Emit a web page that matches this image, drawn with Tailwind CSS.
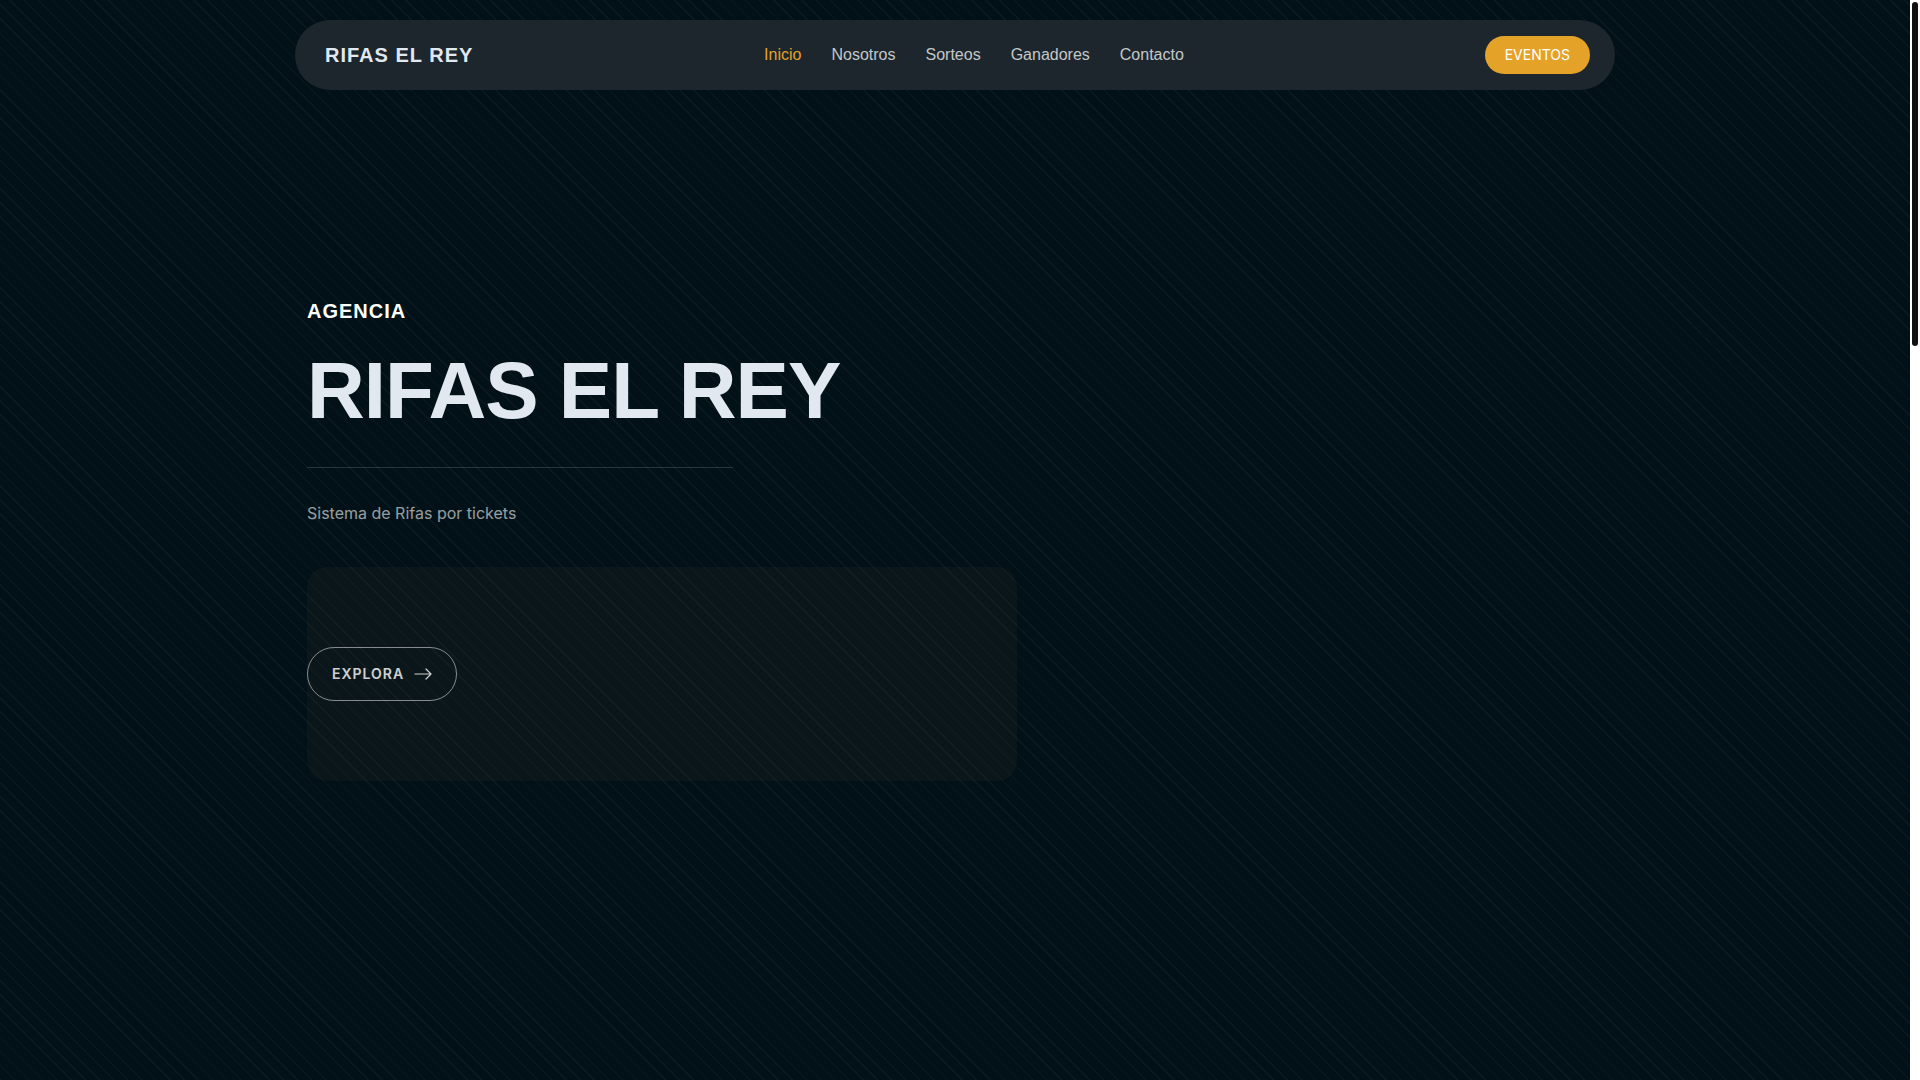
<!DOCTYPE html>
<html lang="es">
<head>
    <meta charset="UTF-8">
    <meta name="viewport" content="width=device-width, initial-scale=1.0">
    <title>Rifas El Rey</title>

    <script src="https://cdn.jsdelivr.net/npm/@tailwindcss/browser@4"></script>
</head>
<body class="flex h-screen overflow-hidden bg-white font-['Inter',sans-serif]">

    <div class="flex-1 flex flex-col bg-[#011117] bg-[repeating-linear-gradient(45deg,rgba(255,255,255,0.04),rgba(255,255,255,0.04)_1px,transparent_1px,transparent_10px)]">

        <header class="w-full max-w-[1320px] mx-auto mt-5">
            <nav class="h-[70px] pl-[30px] pr-[25px] flex items-center justify-between rounded-full bg-[#1c262c]">
                <a href="#" class="font-['Liberation_Sans',sans-serif] text-xl font-bold tracking-[1px] text-[#e2e8f0]">RIFAS EL REY</a>
                <ul class="mr-[10px] flex gap-[30px] font-['Liberation_Sans',sans-serif] text-base text-white/75">
                    <li><a href="#inicio" class="text-[#e4a229]">Inicio</a></li>
                    <li><a href="#nosotros">Nosotros</a></li>
                    <li><a href="#sorteos">Sorteos</a></li>
                    <li><a href="#ganadores">Ganadores</a></li>
                    <li><a href="#contacto">Contacto</a></li>
                </ul>
                <a href="#eventos" class="px-5 py-2 rounded-full bg-[#e4a229] text-sm leading-[22px] text-white">EVENTOS</a>
            </nav>
        </header>

        <main id="inicio" class="w-full max-w-[1320px] mx-auto px-3 pt-[209px]">
            <section class="w-full max-w-[710px]">
                <h5 class="font-['Liberation_Sans',sans-serif] text-xl leading-6 font-bold tracking-[1px] text-white">AGENCIA</h5>
                <h1 class="mt-5 font-['Liberation_Sans',sans-serif] text-[80px] leading-[96px] font-bold tracking-[-1px] text-[#e2e8f0]">RIFAS EL REY</h1>
                <hr class="mt-7 w-3/5 border-white/15">
                <p class="mt-[33px] text-base leading-6 text-white/60">Sistema de Rifas por tickets</p>

                <div class="mt-[42px] py-20 flex rounded-[20px] bg-[#ff9050]/4">
                    <a href="#sorteos" class="h-[54px] px-6 flex items-center gap-[10px] rounded-full border border-white/50 text-sm font-semibold tracking-[1px] text-white/80">
                        EXPLORA
                        <svg class="w-[18px] h-3" viewBox="0 0 18 12" fill="none" stroke="currentColor" stroke-width="1.2" stroke-linecap="round" stroke-linejoin="round">
                            <path d="M1 6h16M12 1l5 5-5 5"/>
                        </svg>
                    </a>
                </div>
            </section>
        </main>
    </div>

    <!-- Barra de desplazamiento -->
    <div class="w-[10px] p-[2px] bg-white" aria-hidden="true">
        <div class="h-[344px] rounded-full bg-[#111]"></div>
    </div>

</body>
</html>
